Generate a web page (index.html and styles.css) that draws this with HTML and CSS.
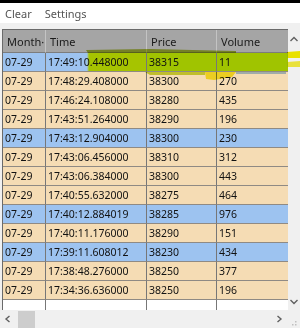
FILE: index.html
```html
<!DOCTYPE html>
<html>
<head>
<meta charset="utf-8">
<link rel="stylesheet" href="styles.css">
</head>
<body>
<div class="topbar"></div>
<div class="menu"><span class="mi">Clear</span><span class="mi">Settings</span></div>
<div class="spacer"></div>
<div class="main">
  <div class="gridwrap">
    <div class="grid">
      <div class="hc">Month·</div><div class="hc">Time</div><div class="hc">Price</div><div class="hc last">Volume</div>

      <div class="c blue">07-29</div><div class="c hl-time">17:49:10.448000</div><div class="c hl">38315</div><div class="c hl last">11</div>
      <div class="c">07-29</div><div class="c">17:48:29.408000</div><div class="c">38300</div><div class="c last">270</div>
      <div class="c">07-29</div><div class="c">17:46:24.108000</div><div class="c">38280</div><div class="c last">435</div>
      <div class="c">07-29</div><div class="c">17:43:51.264000</div><div class="c">38290</div><div class="c last">196</div>
      <div class="c blue">07-29</div><div class="c blue">17:43:12.904000</div><div class="c blue">38300</div><div class="c blue last">230</div>
      <div class="c">07-29</div><div class="c">17:43:06.456000</div><div class="c">38310</div><div class="c last">312</div>
      <div class="c">07-29</div><div class="c">17:43:06.384000</div><div class="c">38300</div><div class="c last">443</div>
      <div class="c">07-29</div><div class="c">17:40:55.632000</div><div class="c">38275</div><div class="c last">464</div>
      <div class="c blue">07-29</div><div class="c blue">17:40:12.884019</div><div class="c blue">38285</div><div class="c blue last">976</div>
      <div class="c">07-29</div><div class="c">17:40:11.176000</div><div class="c">38290</div><div class="c last">151</div>
      <div class="c blue">07-29</div><div class="c blue">17:39:11.608012</div><div class="c blue">38230</div><div class="c blue last">434</div>
      <div class="c">07-29</div><div class="c">17:38:48.276000</div><div class="c">38250</div><div class="c last">377</div>
      <div class="c">07-29</div><div class="c">17:34:36.636000</div><div class="c">38250</div><div class="c last">196</div>

      <div class="f"></div><div class="f"></div><div class="f"></div><div class="f last"></div>
    </div>
    <svg class="marker" width="300" height="60" viewBox="0 0 300 60">
      <path d="M86 21 L150 20 L236 22 L236 24 L150 24 L88 24 Z" fill="#b4c83c"/>
      <path d="M145 43 L205 43 L205 46 L150 46 Z" fill="#c8dc40"/>
      <path d="M205 43 L236 43 L232 48 L214 51 L206 50 Z" fill="#f6ee30"/>
      <path d="M236 43 L286 43 L286 45 L236 45 Z" fill="#a8c8f0"/>
      <path d="M287 23 L300 22 L300 29 L287 29 Z" fill="#f8f000"/>
      <path d="M287 33 L300 32 L300 38 L287 38 Z" fill="#f8f040"/>
    </svg>
  </div>
  <div class="vscroll">
    <svg class="arr" width="10" height="8" viewBox="0 0 10 8"><path d="M1.5 6 L5 2.5 L8.5 6" fill="none" stroke="#606060" stroke-width="1.4"/></svg>
    <svg class="arr" width="10" height="8" viewBox="0 0 10 8"><path d="M1.5 2 L5 5.5 L8.5 2" fill="none" stroke="#606060" stroke-width="1.4"/></svg>
  </div>
</div>
<div class="hscroll">
  <svg class="harr" width="10" height="10" viewBox="0 0 10 10"><path d="M6.5 2 L3 5 L6.5 8" fill="none" stroke="#606060" stroke-width="1.4"/></svg>
  <div class="thumb"></div>
  <div class="track"></div>
  <svg class="harr" width="10" height="10" viewBox="0 0 10 10"><path d="M3.5 2 L7 5 L3.5 8" fill="none" stroke="#606060" stroke-width="1.4"/></svg>
  <svg class="grip" width="8" height="18" viewBox="0 0 8 18"><g fill="#c0c0c0"><rect x="5" y="11" width="1.5" height="1.5"/><rect x="2" y="14" width="1.5" height="1.5"/><rect x="5" y="14" width="1.5" height="1.5"/></g></svg>
</div>
</body>
</html>
```
FILE: styles.css
```css
html, body {
  margin: 0;
  padding: 0;
}
body {
  width: 300px;
  height: 328px;
  overflow: hidden;
  background: #f0f0f0;
  font-family: "Noto Sans", "Open Sans", sans-serif;
  font-size: 10.5px;
  color: #111;
}
.topbar {
  height: 3px;
  background: #000;
}
.menu {
  height: 20px;
  background: #fff;
  display: flex;
  align-items: center;
  padding-left: 5px;
  gap: 13px;
  color: #555;
  font-size: 11px;
}
.spacer {
  height: 6px;
}
.main {
  display: flex;
  height: 281px;
  padding-left: 2px;
}
.gridwrap {
  position: relative;
  width: 286px;
  height: 281px;
}
.grid {
  display: grid;
  grid-template-columns: 43px 101px 70px 71px;
  grid-template-rows: 23px repeat(13, 19px) 1fr;
  width: 286px;
  height: 281px;
  box-sizing: border-box;
  border-left: 1px solid #6a6a6a;
  border-top: 1px solid #6a6a6a;
  background: #fff;
}
.hc {
  background: #a5a5a5;
  border-right: 1px solid #c4c4c4;
  border-bottom: 1px solid #7c7c7c;
  display: flex;
  align-items: center;
  padding-left: 4px;
  font-size: 11px;
  color: #1a1a1a;
  white-space: nowrap;
  overflow: hidden;
}
.c {
  background: #f5dcb4;
  border-right: 1px solid #777;
  border-bottom: 1px solid #8f8a84;
  display: flex;
  align-items: center;
  padding-left: 2px;
  white-space: nowrap;
  overflow: hidden;
}
.c.blue {
  background: #9dc3f0;
}
.c.hl {
  background: #a0c400;
}
.c.hl-time {
  background: linear-gradient(to right, #9dc3f0 0, #9dc3f0 41px, #a6c400 43px, #a6c400 100%);
}
.last {
  border-right: none;
}
.f {
  border-right: 1px solid #777;
}
.f.last {
  border-right: none;
}
.marker {
  position: absolute;
  left: -2px;
  top: 0;
  mix-blend-mode: multiply;
  pointer-events: none;
}
.vscroll {
  width: 12px;
  height: 281px;
  background: #f0f0f0;
  display: flex;
  flex-direction: column;
  justify-content: space-between;
  align-items: center;
  padding: 6px 0 4px;
  box-sizing: border-box;
}
.arr {
  display: block;
}
.hscroll {
  height: 18px;
  display: flex;
  align-items: center;
  background: #f0f0f0;
  padding-left: 3px;
}
.harr {
  display: block;
  width: 10px;
  height: 10px;
}
.thumb {
  width: 17px;
  height: 17px;
  margin-left: 5px;
  align-self: flex-end;
  background: #cdcdcd;
}
.track {
  flex: 1;
}
.grip {
  display: block;
  margin-left: 6px;
  margin-right: 2px;
}
```
